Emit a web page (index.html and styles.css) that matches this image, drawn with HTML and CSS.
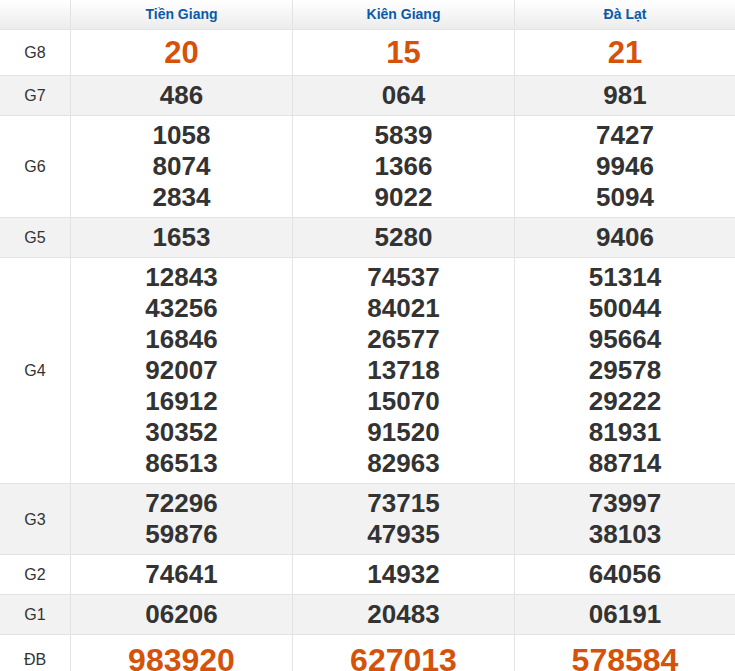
FILE: index.html
```html
<!DOCTYPE html>
<html lang="vi">
<head>
<meta charset="utf-8">
<title>Kết quả xổ số</title>
<link rel="stylesheet" href="styles.css">
</head>
<body>
<table class="kq">
  <colgroup>
    <col class="c-label">
    <col class="c-prov">
    <col class="c-prov">
    <col class="c-last">
  </colgroup>
  <thead>
    <tr>
      <th></th>
      <th>Tiền Giang</th>
      <th>Kiên Giang</th>
      <th>Đà Lạt</th>
    </tr>
  </thead>
  <tbody>
    <tr class="g8">
      <td class="lbl">G8</td>
      <td>20</td><td>15</td><td>21</td>
    </tr>
    <tr class="alt">
      <td class="lbl">G7</td>
      <td>486</td><td>064</td><td>981</td>
    </tr>
    <tr>
      <td class="lbl">G6</td>
      <td>1058<br>8074<br>2834</td>
      <td>5839<br>1366<br>9022</td>
      <td>7427<br>9946<br>5094</td>
    </tr>
    <tr class="alt">
      <td class="lbl">G5</td>
      <td>1653</td><td>5280</td><td>9406</td>
    </tr>
    <tr>
      <td class="lbl">G4</td>
      <td>12843<br>43256<br>16846<br>92007<br>16912<br>30352<br>86513</td>
      <td>74537<br>84021<br>26577<br>13718<br>15070<br>91520<br>82963</td>
      <td>51314<br>50044<br>95664<br>29578<br>29222<br>81931<br>88714</td>
    </tr>
    <tr class="alt">
      <td class="lbl">G3</td>
      <td>72296<br>59876</td>
      <td>73715<br>47935</td>
      <td>73997<br>38103</td>
    </tr>
    <tr>
      <td class="lbl">G2</td>
      <td>74641</td><td>14932</td><td>64056</td>
    </tr>
    <tr class="alt">
      <td class="lbl">G1</td>
      <td>06206</td><td>20483</td><td>06191</td>
    </tr>
    <tr class="db">
      <td class="lbl">ĐB</td>
      <td>983920</td><td>627013</td><td>578584</td>
    </tr>
  </tbody>
</table>
</body>
</html>
```

FILE: styles.css
```css
html, body {
  margin: 0;
  padding: 0;
  background: #fff;
}

.kq {
  width: 735px;
  table-layout: fixed;
  border-collapse: separate;
  border-spacing: 0;
  font-family: "Liberation Sans", Arial, sans-serif;
  color: #333;
}

.c-label { width: 71px; }
.c-prov { width: 222px; }
.c-last { width: 220px; }

.kq th,
.kq td {
  padding: 4px 0;
  text-align: center;
  vertical-align: middle;
  border-bottom: 1px solid #e3e3e3;
  border-right: 1px solid #e3e3e3;
}

.kq th:last-child,
.kq td:last-child {
  border-right: none;
}

.kq th {
  background: linear-gradient(to bottom, #ffffff 0%, #ececec 100%);
  color: #0b5aa8;
  font-size: 14px;
  font-weight: bold;
  line-height: 21px;
}

.kq td {
  font-size: 26px;
  font-weight: bold;
  line-height: 31px;
}

.kq td.lbl {
  font-size: 16px;
  font-weight: normal;
  color: #333;
}

.kq tr.alt td {
  background: #f2f2f2;
}

.kq tr.g8 td {
  color: #d4520a;
  font-size: 31px;
  line-height: 37px;
}

.kq tr.db td {
  color: #d4520a;
  font-size: 32px;
  line-height: 42px;
}

.kq tr.g8 td.lbl,
.kq tr.db td.lbl {
  color: #333;
  font-size: 16px;
}
```
